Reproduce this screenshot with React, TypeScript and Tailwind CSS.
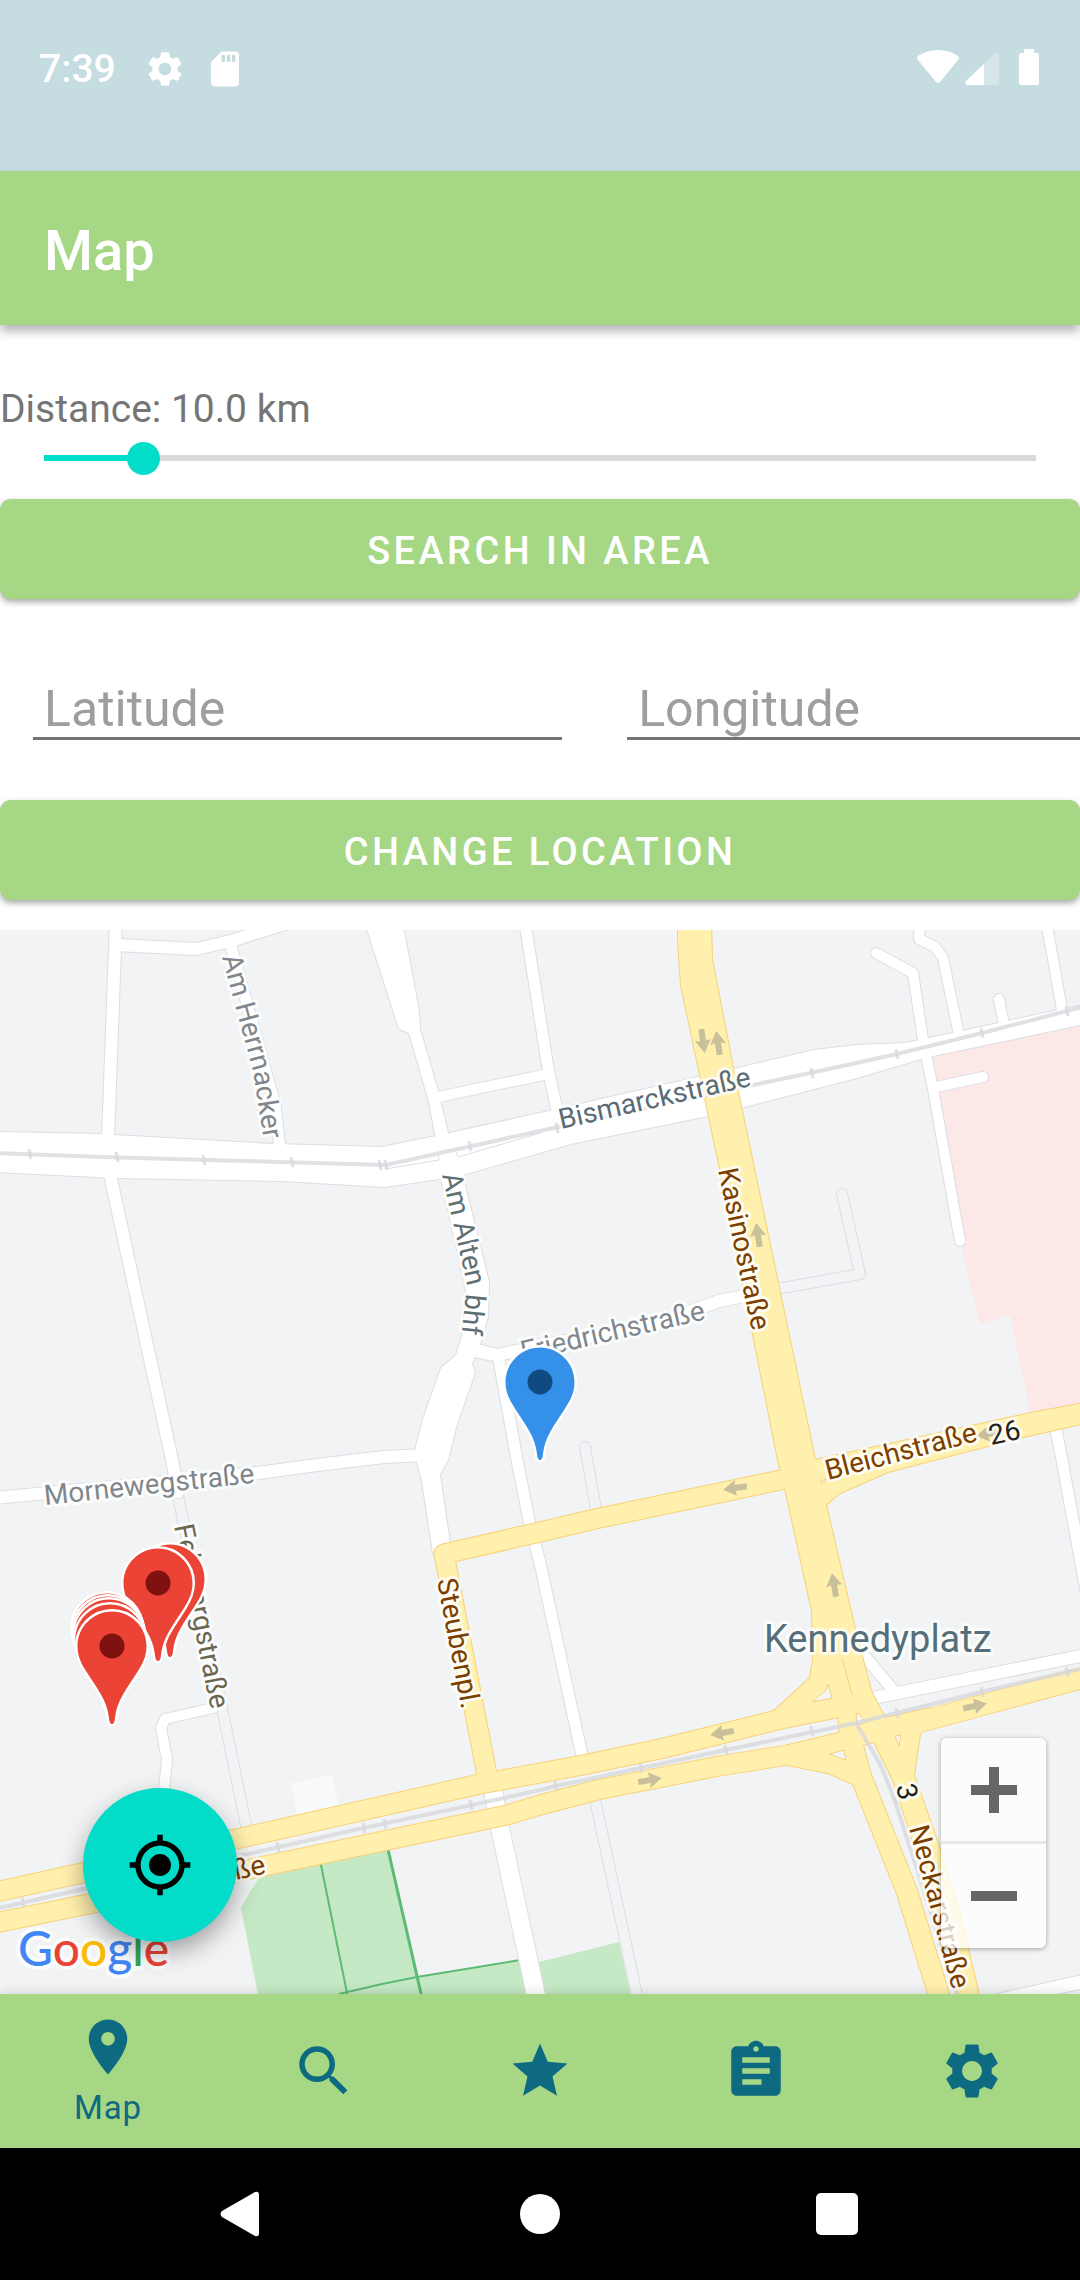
import { useState } from "react";
import {
  MdAssignment,
  MdMyLocation,
  MdPlace,
  MdSdCard,
  MdSearch,
  MdSettings,
  MdStar,
} from "react-icons/md";

type Road = { d: string; w: number };

const WHITE_ROADS: Road[] = [
  { d: "M116 920 L108 1140", w: 12 },
  { d: "M116 945 L196 949 L231 941 L300 919", w: 12 },
  { d: "M231 946 L275 1105 L280 1150", w: 11 },
  { d: "M526 930 L548 1068 L559 1120", w: 11 },
  { d: "M438 1097 L548 1074", w: 10 },
  { d: "M109 1170 L172 1460 L178 1492", w: 12 },
  { d: "M-5 1498 L258 1473 L317 1465 L384 1457 L425 1455", w: 12 },
  { d: "M480 1351 L497 1355 L540 1346 L654 1325 L719 1301 L760 1293", w: 12 },
  { d: "M213 1708 L165 1719 L161 1728 L167 1759 L163 1800", w: 10 },
  { d: "M498 1355 L517 1460 L530 1525 L540 1563 L583 1760", w: 11 },
  { d: "M493 1790 L500 1828 L537 2000", w: 18 },
  { d: "M876 953 L913 973 L923 1040 L933 1089 L960 1241", w: 10 },
  { d: "M920 920 L919 939 L935 947 L943 958 L959 1035", w: 10 },
  { d: "M999 999 L1004 1025", w: 10 },
  { d: "M1046 920 L1063 1015", w: 10 },
  { d: "M936 1087 L983 1077", w: 10 },
  { d: "M1055 1425 L1062 1460 L1086 1590", w: 11 },
  { d: "M868 1699 L1090 1654", w: 12 },
  { d: "M858 1648 L893 1690", w: 11 },
  { d: "M1000 2000 L1090 1980", w: 13 },
];

const WHITE_AREAS = [
  "M-5 1132 L103 1134 L114 1135 L274 1144 L382 1147 L436 1136 L540 1113 L698 1077 L733 1069 L814 1050 L857 1045 L905 1043 L953 1033 L1058 1010 L1090 1004 L1090 1023 L933 1056 L921 1059 L857 1078 L741 1108 L708 1116 L571 1144 L463 1175 L439 1179 L385 1187 L282 1181 L117 1178 L-5 1172 Z",
  "M364 920 L399 1029 L409 1033 L429 1102 L437 1145 L451 1145 L438 1091 L420 1029 L419 1011 L402 920 Z",
  "M438 1165 L460 1165 L489 1282 L488 1316 L480 1345 L497 1349 L492 1361 L475 1357 L472 1364 L475 1373 L457 1424 L448 1460 L440 1475 L451 1550 L433 1553 L422 1481 L417 1463 L415 1450 L423 1419 L441 1368 L456 1355 L463 1333 L466 1290 Z",
];

const LANES: Road[] = [
  { d: "M178 1496 L223 1713 L248 1835", w: 10 },
  { d: "M760 1292 L860 1274 L842 1194", w: 10 },
  { d: "M585 1447 L597 1515", w: 10 },
  { d: "M594 1795 L638 2000", w: 10 },
];

const YELLOW_ROADS: Road[] = [
  { d: "M-5 1892 L232 1840 L480 1784 L540 1773 L588 1764 L664 1748 L781 1719 L836 1708", w: 19 },
  { d: "M-5 1923 L98 1902 L250 1869 L388 1840 L507 1815 L540 1805 L597 1790 L719 1766 L788 1755 L850 1740", w: 19 },
  { d: "M890 1730 L990 1703 L1090 1676", w: 20 },
  { d: "M444 1554 L540 1532 L595 1519 L790 1478", w: 19 },
  { d: "M444 1554 L488 1780", w: 19 },
];

const YELLOW_AREAS = [
  "M678 920 L678 940 L681 985 L700 1075 L719 1164 L778 1460 L785 1488 L812 1611 L813 1660 L810 1678 L775 1710 L790 1722 L838 1716 L840 1735 L788 1745 L787 1765 L828 1773 L853 1784 L897 1894 L930 2000 L951 2000 L917 1890 L870 1772 L863 1745 L874 1742 L893 1780 L910 1832 L960 2000 L980 2000 L961 1918 L940 1849 L914 1775 L920 1734 L924 1729 L935 1720 L930 1708 L885 1718 L871 1691 L854 1625 L826 1505 L815 1460 L779 1288 L733 1068 L712 959 L711 920 Z",
  "M800 1463 L843 1454 L1031 1413 L1090 1402 L1090 1422 L1019 1438 L888 1472 L838 1494 L826 1505 L805 1505 Z",
];

const TRAFFIC_ISLANDS = [
  "M828 1684 L832 1698 L812 1702 L826 1690 Z",
  "M856 1713 L860 1714 L865 1723 L857 1725 Z",
  "M829 1754 L844 1750 L846 1760 Z",
  "M895 1736 L901 1735 L899 1746 Z",
  "M820 1481 L826 1479 L822 1484 Z",
];

const RAILS = [
  "M-5 1153 L103 1157 L207 1160 L386 1165 L540 1131 L753 1085 L824 1070 L897 1054 L982 1033 L1067 1011 L1090 1005",
  "M-5 1909 L83 1889 L248 1854 L363 1828 L472 1805 L540 1790 L556 1786 L726 1750 L856 1723 L981 1692 L1067 1672 L1090 1667",
  "M856 1723 L881 1766 L895 1801 L957 1994",
];

const RAIL_TICKS: [number, number][] = [
  [30, 1154], [117, 1157], [204, 1160], [292, 1162], [380, 1165], [386, 1165], [470, 1146],
  [557, 1128], [812, 1073], [897, 1054], [982, 1033], [1067, 1011], [23, 1902], [278, 1847],
  [364, 1828], [385, 1824], [471, 1805], [556, 1786], [641, 1768], [726, 1750], [812, 1731],
  [897, 1713], [982, 1692], [1067, 1672], [895, 1801],
];

const ARROWS: [number, number, number][] = [
  [703, 1041, 172], [718, 1043, -8], [758, 1235, -8], [735, 1488, 262], [988, 1434, 260],
  [834, 1585, -10], [722, 1733, 260], [975, 1706, 78], [650, 1780, 80],
];

const RED_PINS: [number, number][] = [
  [170, 1579], [158, 1583], [107, 1628], [108, 1631], [109, 1634], [110, 1639], [112, 1646],
];

const BLUE = "#5a6b76";
const GREY = "#80868b";
const BROWN = "#7a3e00";

const LABELS = [
  { id: "herrnacker", text: "Am Herrnacker", d: "M222 957 L253 1071 L267 1160", fill: GREY },
  { id: "alten", text: "Am Alten bhf", d: "M442 1175 L467 1284 L460 1350", fill: "#5f6f72" },
  { id: "friedrich", text: "Friedrichstraße", d: "M523 1361 L760 1307", fill: GREY },
  { id: "bismarck", text: "Bismarckstraße", d: "M561 1129 L800 1075", fill: BLUE },
  { id: "kasino", text: "Kasinostraße", d: "M718 1170 L758 1360", fill: BROWN },
  { id: "bleich", text: "Bleichstraße", d: "M828 1480 L1020 1430", fill: BROWN },
  { id: "road26", text: "26", d: "M991 1445 L1080 1426", fill: "#202124" },
  { id: "morneweg", text: "Mornewegstraße", d: "M45 1505 L300 1478", fill: GREY },
  { id: "feldberg", text: "Feldbergstraße", d: "M174 1526 L218 1746", fill: "#6b6652" },
  { id: "steuben", text: "Steubenpl.", d: "M437 1580 L472 1764", fill: BROWN },
  { id: "rhein", text: "ße", d: "M236 1880 L300 1866", fill: BROWN },
  { id: "road3", text: "3", d: "M896 1786 L908 1840", fill: "#202124" },
  { id: "neckar", text: "Neckarstraße", d: "M909 1828 L963 2030", fill: BROWN },
];

const PIN =
  "M0 -34.500 C19 -34.500 34.500 -19 34.500 0 C34.500 10 31 17 26 25 C14 44 5 54 3 72 Q2.500 78 0 78 Q-2.500 78 -3 72 C-5 54 -14 44 -26 25 C-31 17 -34.500 10 -34.500 0 C-34.500 -19 -19 -34.500 0 -34.500 Z";

function Strokes({ roads, color, extra = 0 }: { roads: Road[]; color: string; extra?: number }) {
  return (
    <g fill="none" stroke={color} strokeLinejoin="round" strokeLinecap="round">
      {roads.map((r) => (
        <path key={r.d} d={r.d} strokeWidth={r.w + extra} />
      ))}
    </g>
  );
}

function Pin({ x, y, fill, dot }: { x: number; y: number; fill: string; dot: string }) {
  return (
    <g transform={`translate(${x} ${y})`}>
      <path d={PIN} fill={fill} stroke="#fff" strokeWidth="5" paintOrder="stroke" />
      <circle r="12.500" fill={dot} />
    </g>
  );
}

function StreetMap() {
  return (
    <svg
      viewBox="0 930 1080 1064"
      preserveAspectRatio="xMidYMid slice"
      className="absolute inset-0 h-full w-full"
      role="img"
      aria-label="Street map"
    >
      <rect x="-600" y="0" width="2400" height="3000" fill="#f1f3f5" />
      <path d="M933 1050 L939 1096 L961 1244 L980 1324 L1010 1315 L1031 1416 L1090 1402 L1090 1015 Z" fill="#fce8e6" />
      <path d="M291 1783 L332 1775 L340 1810 L298 1820 Z" fill="#f8f9fb" />
      <path d="M259 1878 L388 1846 L417 1977 L520 1960 L528 2000 L259 2000 L241 1908 L251 1890 Z" fill="#c5e9c5" />
      <path d="M535 1963 L619 1942 L632 2000 L540 2000 Z" fill="#c5e9c5" />
      <g fill="none" stroke="#5dbb74">
        <path d="M320 1860 L348 1998" strokeWidth="2" />
        <path d="M387 1845 L422 1998" strokeWidth="3" />
        <path d="M339 1994 L382 1984 L417 1977 L520 1960" strokeWidth="2" />
      </g>

      <Strokes roads={LANES} color="#dcdee1" extra={2} />
      <Strokes roads={LANES} color="#f1f3f5" />
      <Strokes roads={WHITE_ROADS} color="#dcdee2" extra={2} />
      {WHITE_AREAS.map((d) => (
        <path key={d} d={d} fill="#fff" stroke="#dcdee2" strokeWidth="2" />
      ))}
      <Strokes roads={WHITE_ROADS} color="#fff" />
      {WHITE_AREAS.map((d) => (
        <path key={d} d={d} fill="#fff" />
      ))}
      <path d="M385 1169 L439 1160 L438 1155 M456 1152 L458 1157 L540 1133" fill="none" stroke="#dcdee2" />

      <Strokes roads={YELLOW_ROADS} color="#f7d277" extra={2} />
      {YELLOW_AREAS.map((d) => (
        <path key={d} d={d} fill="none" stroke="#f7d277" strokeWidth="2" />
      ))}
      <Strokes roads={YELLOW_ROADS} color="#fff0ae" />
      {YELLOW_AREAS.map((d) => (
        <path key={d} d={d} fill="#fff0ae" />
      ))}
      {TRAFFIC_ISLANDS.map((d) => (
        <path key={d} d={d} fill="#f4f5f6" stroke="#f7d277" />
      ))}
      <path d="M842 1658 L852 1695" stroke="#f7d277" fill="none" />

      <g fill="none" stroke="#d5d7db" strokeOpacity="0.75" strokeWidth="4">
        {RAILS.map((d) => (
          <path key={d} d={d} />
        ))}
        {RAIL_TICKS.map(([x, y]) => (
          <path key={`${x}-${y}`} d={`M${x - 1} ${y - 5} L${x + 1} ${y + 5}`} strokeWidth="3" />
        ))}
      </g>

      <g fill="#c8bf9b">
        {ARROWS.map(([x, y, r]) => (
          <path
            key={`${x}-${y}`}
            transform={`translate(${x} ${y}) rotate(${r})`}
            d="M0 -12 L8 1 L3 0 V12 H-3 V0 L-8 1 Z"
          />
        ))}
      </g>

      <g className="font-[Roboto,sans-serif]" stroke="#fff" strokeOpacity="0.8" strokeWidth="6" strokeLinejoin="round" paintOrder="stroke">
        {LABELS.map((l) => (
          <g key={l.id}>
            <path id={l.id} d={l.d} fill="none" stroke="none" />
            <text fontSize="28" fill={l.fill}>
              <textPath href={`#${l.id}`}>{l.text}</textPath>
            </text>
          </g>
        ))}
        <text x="764" y="1652" fontSize="38" fill="#546e7a">
          Kennedyplatz
        </text>
      </g>

      <Pin x={540} y={1382} fill="#3590e9" dot="#114a80" />
      {RED_PINS.map(([x, y]) => (
        <Pin key={`${x}-${y}`} x={x} y={y} fill="#eb4336" dot="#7f1210" />
      ))}

      <text
        x="18"
        y="1966"
        fontSize="48"
        fontWeight="500"
        className="font-[Lato,sans-serif]"
        stroke="#fff"
        strokeOpacity="0.7"
        strokeWidth="8"
        strokeLinejoin="round"
        paintOrder="stroke"
      >
        <tspan fill="#4285f4">G</tspan>
        <tspan fill="#ea4335">o</tspan>
        <tspan fill="#fbbc04">o</tspan>
        <tspan fill="#4285f4">g</tspan>
        <tspan fill="#34a853">l</tspan>
        <tspan fill="#ea4335">e</tspan>
      </text>
    </svg>
  );
}

function StatusBar() {
  return (
    <div className="flex h-[171px] items-start justify-between bg-[#c5dce0] pt-[46px] pr-[41px] pl-[39px] text-white">
      <div className="flex items-center">
        <span className="text-[39px] leading-[46px] font-medium">7:39</span>
        <MdSettings className="ml-[28px] size-[42px]" />
        <MdSdCard className="ml-[18px] size-[42px]" />
      </div>
      <div className="flex items-end gap-[6px] pt-[3px]">
        <svg viewBox="0 0 42 36" className="h-[36px] w-[42px]" fill="currentColor">
          <path d="M1 7 C12 -1 30 -1 41 7 Q43 9 41 11 L23 33 Q21 35 19 33 L1 11 Q-1 9 1 7 Z" />
        </svg>
        <svg viewBox="0 0 34 36" className="h-[36px] w-[34px]" fill="currentColor">
          <path d="M34 5 V34 Q34 36 32 36 H2 Q-1 35 1 32 L30 4 Q33 1 34 5 Z" opacity="0.3" />
          <path d="M19 15 V36 H2 Q-1 35 1 32 Z" />
        </svg>
        <svg viewBox="0 0 20 36" className="ml-[14px] h-[36px] w-[20px]" fill="currentColor">
          <path d="M5 0 H15 V4 H18 Q20 4 20 6 V34 Q20 36 18 36 H2 Q0 36 0 34 V6 Q0 4 2 4 H5 Z" />
        </svg>
      </div>
    </div>
  );
}

function ActionButton({ children }: { children: string }) {
  return (
    <button
      type="button"
      className="flex h-[100px] w-full items-center justify-center rounded-[11px] bg-[#a6d785] pt-[3px] text-[38px] leading-[46px] font-medium tracking-[0.09em] text-white uppercase shadow-[0_3px_6px_rgba(0,0,0,0.35)]"
    >
      {children}
    </button>
  );
}

function CoordinateField({ label }: { label: string }) {
  return (
    <input
      type="text"
      inputMode="decimal"
      aria-label={label}
      placeholder={label}
      className="block h-[61px] w-[49vw] shrink-0 border-b-3 border-[#757575] bg-transparent px-[11px] pt-[2px] text-[50px] leading-[58px] text-gray-900 outline-none placeholder:text-[#9e9e9e]"
    />
  );
}

const TABS = [
  { label: "Map", Icon: MdPlace },
  { label: "Search", Icon: MdSearch },
  { label: "Favorites", Icon: MdStar },
  { label: "Reports", Icon: MdAssignment },
  { label: "Settings", Icon: MdSettings },
];

export default function App() {
  const [distance, setDistance] = useState(10);

  return (
    <div className="flex min-h-screen flex-col overflow-hidden bg-white font-[Roboto,sans-serif]">
      <StatusBar />
      <header className="relative flex h-[154px] items-center bg-[#a6d785] px-11 pt-[6px] shadow-[0_6px_10px_rgba(0,0,0,0.3)]">
        <h1 className="text-[56px] leading-[64px] font-medium text-white">Map</h1>
      </header>

      <section className="pt-[61px] pb-[30px]">
        <label htmlFor="distance" className="block text-[39px] leading-[46px] text-[#757575]">
          Distance: {distance.toFixed(1)} km
        </label>
        <div className="relative mt-[2px] mb-[17px] flex h-12 items-center px-[28px]">
          <div className="absolute inset-x-11 top-1/2 h-[6px] -translate-y-1/2 bg-[#dadada]">
            <div className="h-full bg-[#03dcc8]" style={{ width: `${distance}%` }} />
          </div>
          <input
            id="distance"
            type="range"
            min={0}
            max={100}
            value={distance}
            onChange={(e) => setDistance(Number(e.target.value))}
            className="relative h-[33px] w-full appearance-none bg-transparent [&::-webkit-slider-thumb]:size-[33px] [&::-webkit-slider-thumb]:appearance-none [&::-webkit-slider-thumb]:rounded-full [&::-webkit-slider-thumb]:bg-[#03dcc8]"
          />
        </div>
        <ActionButton>Search in area</ActionButton>
        <div className="mt-20 mb-[60px] flex gap-[65px] overflow-hidden pl-[33px]">
          <CoordinateField label="Latitude" />
          <CoordinateField label="Longitude" />
        </div>
        <ActionButton>Change location</ActionButton>
      </section>

      <main className="relative min-h-[600px] flex-1 overflow-hidden">
        <StreetMap />
        <button
          type="button"
          aria-label="My location"
          className="absolute bottom-[52px] left-[83px] flex size-[154px] items-center justify-center rounded-full bg-[#03dcc8] text-black shadow-[0_10px_24px_rgba(0,0,0,0.35)]"
        >
          <MdMyLocation className="size-[66px]" />
        </button>
        <div className="absolute right-[34px] bottom-[46px] flex w-[105px] flex-col divide-y-3 divide-[#e6e8e6] overflow-hidden rounded-md bg-white/75 text-[#666] shadow-[0_1px_5px_rgba(0,0,0,0.35)]">
          <button type="button" aria-label="Zoom in" className="flex h-[106px] items-center justify-center">
            <svg viewBox="0 0 46 46" className="size-[46px]" fill="currentColor">
              <path d="M18 0 H28 V18 H46 V28 H28 V46 H18 V28 H0 V18 H18 Z" />
            </svg>
          </button>
          <button type="button" aria-label="Zoom out" className="flex h-[104px] items-center justify-center">
            <svg viewBox="0 0 46 46" className="size-[46px]" fill="currentColor">
              <path d="M0 18 H46 V28 H0 Z" />
            </svg>
          </button>
        </div>
      </main>

      <nav className="relative grid h-[154px] grid-cols-5 bg-[#a6d785] text-[#0e6a80] shadow-[0_-2px_10px_rgba(0,0,0,0.12)]">
        {TABS.map(({ label, Icon }, i) => (
          <button
            key={label}
            type="button"
            aria-label={label}
            className="flex flex-col items-center justify-center gap-2"
          >
            <Icon className="size-[66px]" />
            {i === 0 && <span className="text-[33px] leading-[40px] tracking-wide">{label}</span>}
          </button>
        ))}
      </nav>

      <div className="flex h-[132px] items-center justify-center bg-black text-white">
        <button type="button" aria-label="Back" className="flex w-[27.5%] justify-center">
          <svg viewBox="0 0 46 46" className="size-[46px]" fill="currentColor">
            <path d="M2 20 L35 1 Q39 0 39 4 V42 Q39 46 35 45 L2 26 Q-1 23 2 20 Z" />
          </svg>
        </button>
        <button type="button" aria-label="Home" className="flex w-[27.5%] justify-center">
          <span className="size-10 rounded-full bg-white" />
        </button>
        <button type="button" aria-label="Recent apps" className="flex w-[27.5%] justify-center">
          <span className="size-[42px] rounded-[5px] bg-white" />
        </button>
      </div>
    </div>
  );
}
